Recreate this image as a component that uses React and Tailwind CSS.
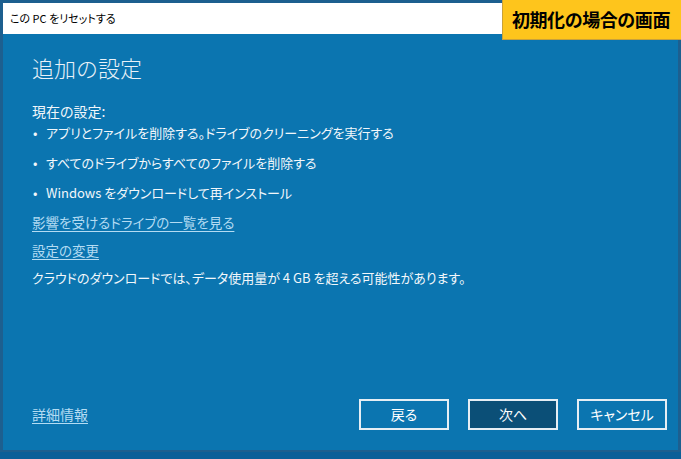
import React from 'react';

const font = { fontFamily: '"Noto Sans CJK JP", "Noto Sans", sans-serif' };

export default function App() {
  const bullets = [
    'アプリとファイルを削除する。ドライブのクリーニングを実行する',
    'すべてのドライブからすべてのファイルを削除する',
    'Windows をダウンロードして再インストール',
  ];

  return (
    <div className="relative w-[681px] h-[459px] overflow-hidden bg-[#0b5f98]" style={font}>
      {/* window */}
      <div className="flex flex-col w-[681px] h-[452px] border-t-[3px] border-l-[3px] border-r-[3px] border-b-[2px] border-[#1d5f8f] bg-[#0b75b0]">
        <div className="h-[31px] bg-white flex items-center pl-[7px] text-[11px] text-black [font-feature-settings:'palt']">
          この PC をリセットする
        </div>

        <div className="flex-1 flex flex-col px-[29px] pt-[18px] text-[#f2f7fb] [font-feature-settings:'palt']">
          <h1 className="text-[22px] font-light leading-[30px] text-[#e8f1f8] [font-feature-settings:normal]">追加の設定</h1>

          <p className="mt-[19px] text-[14px] leading-[20px]">現在の設定:</p>
          <ul className="-mt-[3px] flex flex-col">
            {bullets.map(b => (
              <li key={b} className="flex items-center h-[30px] text-[13px]">
                <span className="w-[14px] pl-[1px]">•</span>
                <span>{b}</span>
              </li>
            ))}
          </ul>
          <a className="h-[28px] flex items-center text-[13.5px] text-[#b4dcf3]">
            <span className="underline underline-offset-[3px]">影響を受けるドライブの一覧を見る</span>
          </a>
          <a className="h-[28px] flex items-center text-[13.5px] text-[#b4dcf3]">
            <span className="underline underline-offset-[3px]">設定の変更</span>
          </a>
          <p className="h-[28px] flex items-center text-[13px]">
            クラウドのダウンロードでは、データ使用量が 4 GB を超える可能性があります。
          </p>

          <div className="mt-auto mb-[20px] flex items-center">
            <a className="text-[14px] text-[#b4dcf3] underline underline-offset-[3px]">詳細情報</a>
            <div className="ml-auto -mr-[18px] flex gap-[19px]">
              <button className="w-[90px] h-[31px] border-2 border-[#e6eef4] text-[14px] text-white">戻る</button>
              <button className="w-[90px] h-[31px] border-2 border-[#e6eef4] bg-[#0b4f77] text-[14px] text-white">次へ</button>
              <button className="w-[90px] h-[31px] border-2 border-[#e6eef4] text-[14px] text-white">キャンセル</button>
            </div>
          </div>
        </div>
      </div>

      {/* label overlay */}
      <div className="absolute top-0 right-0 w-[179px] h-[40px] bg-[#fec51c] border-l border-b border-[#c9a13a] flex items-center pl-[9px] text-[18px] font-bold text-black tracking-tight">
        初期化の場合の画面
      </div>
    </div>
  );
}
